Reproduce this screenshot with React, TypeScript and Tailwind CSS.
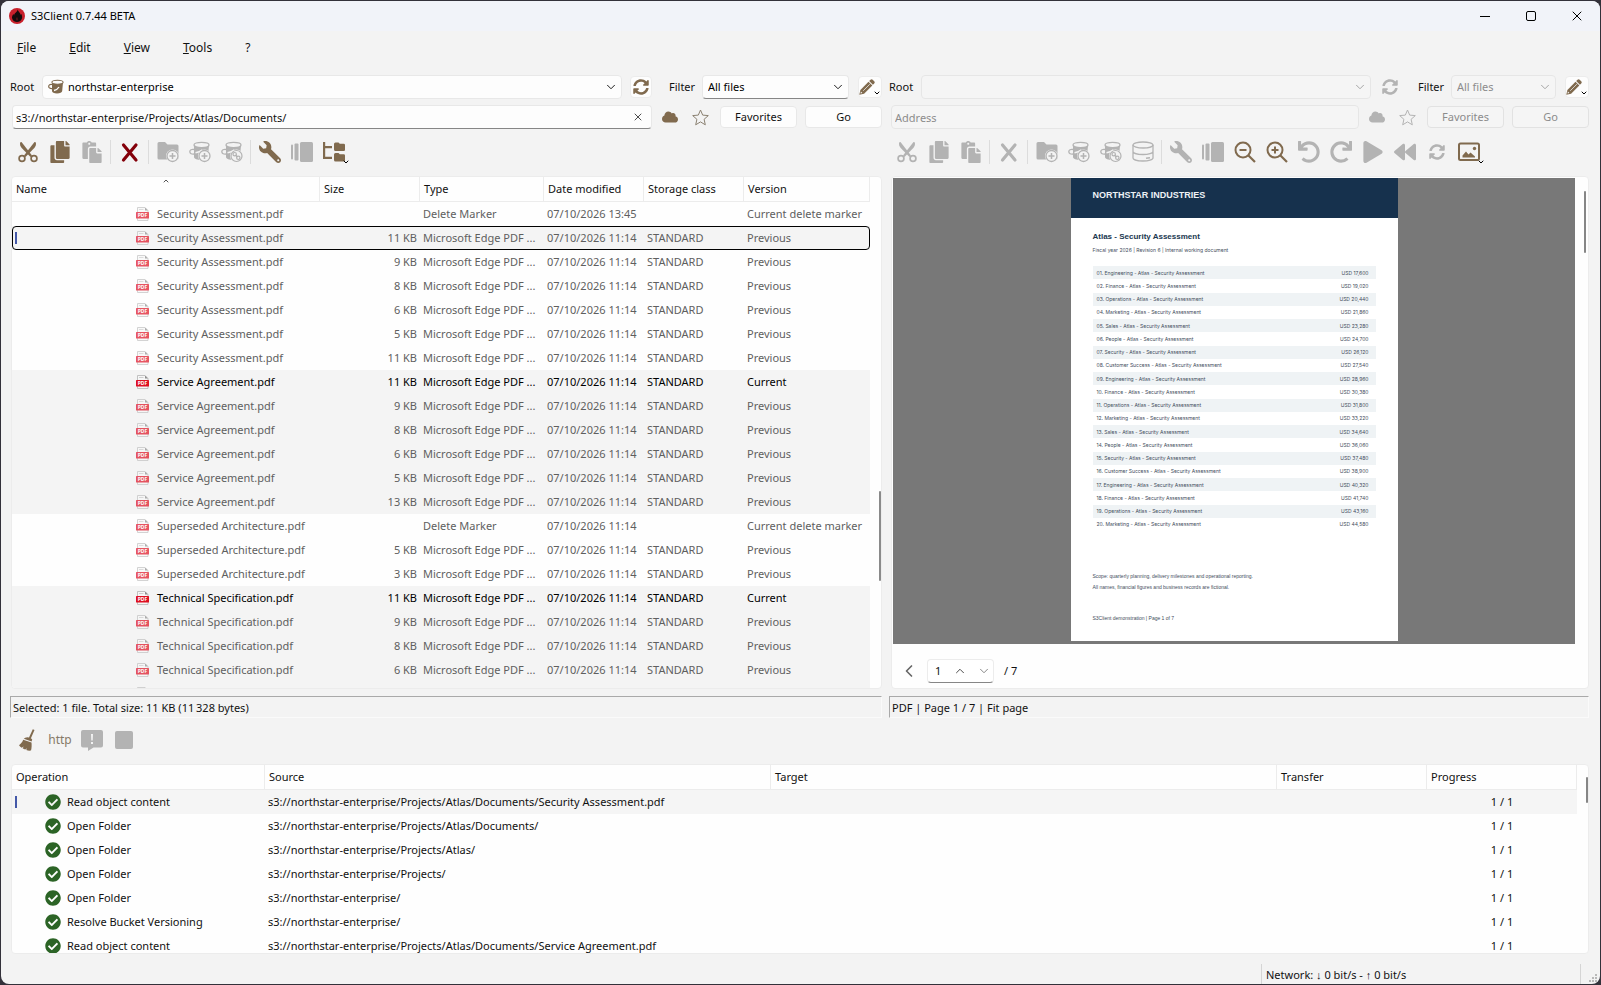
import type { ComponentType, ReactNode } from 'react';
import {
  FaBackward,
  FaCheckCircle,
  FaCloud,
  FaCopy,
  FaPaste,
  FaPlay,
  FaRedo,
  FaSyncAlt,
  FaUndo,
  FaWrench,
} from 'react-icons/fa';
import { ChevronDown, ChevronLeft, ChevronUp, X } from 'lucide-react';

type IconProps = { className?: string };

type FileRow = {
  name: string;
  size: string;
  version: 'Current' | 'Previous' | 'Current delete marker';
  date?: string;
  shaded?: boolean;
  selected?: boolean;
};

const versions = (name: string, sizes: string[], shaded: boolean, current: boolean): FileRow[] =>
  sizes.map((size, i) => ({
    name,
    size,
    shaded,
    version: current && i === 0 ? 'Current' : 'Previous',
  }));

const files: FileRow[] = [
  { name: 'Security Assessment.pdf', size: '', version: 'Current delete marker', date: '07/10/2026 13:45' },
  { name: 'Security Assessment.pdf', size: '11 KB', version: 'Previous', selected: true },
  ...versions('Security Assessment.pdf', ['9 KB', '8 KB', '6 KB', '5 KB', '11 KB'], false, false),
  ...versions('Service Agreement.pdf', ['11 KB', '9 KB', '8 KB', '6 KB', '5 KB', '13 KB'], true, true),
  { name: 'Superseded Architecture.pdf', size: '', version: 'Current delete marker' },
  ...versions('Superseded Architecture.pdf', ['5 KB', '3 KB'], false, false),
  ...versions('Technical Specification.pdf', ['11 KB', '9 KB', '8 KB', '6 KB'], true, true),
];

const operations = [
  { name: 'Read object content', source: 's3://northstar-enterprise/Projects/Atlas/Documents/Security Assessment.pdf' },
  { name: 'Open Folder', source: 's3://northstar-enterprise/Projects/Atlas/Documents/' },
  { name: 'Open Folder', source: 's3://northstar-enterprise/Projects/Atlas/' },
  { name: 'Open Folder', source: 's3://northstar-enterprise/Projects/' },
  { name: 'Open Folder', source: 's3://northstar-enterprise/' },
  { name: 'Resolve Bucket Versioning', source: 's3://northstar-enterprise/' },
  { name: 'Read object content', source: 's3://northstar-enterprise/Projects/Atlas/Documents/Service Agreement.pdf' },
];

const departments = ['Engineering', 'Finance', 'Operations', 'Marketing', 'Sales', 'People', 'Security', 'Customer Success'];

const budget = Array.from({ length: 20 }, (_, i) => ({
  label: `${String(i + 1).padStart(2, '0')}. ${departments[i % 8]} - Atlas - Security Assessment`,
  amount: `USD ${(17600 + i * 1420).toLocaleString('en-US')}`,
}));

/* ---------- icons ---------- */

function LogoIcon() {
  return (
    <svg viewBox="0 0 16 16" className="size-4">
      <circle cx="8" cy="8" r="8" fill="#c8202c" />
      <path d="M8.6 1.5c.4 2 2.600 2.900 3 5.500.3-.5.400-1 .300-1.600 1.200 1.700 1.700 3.800.800 5.700-.8 1.900-2.600 3-4.700 3s-4-1.200-4.700-3c-.7-2 0-3.800 1.200-5.300 0 .7.200 1.200.600 1.600C5.200 4.900 8.700 4 8.600 1.500z" fill="#140b0c" />
      <path d="M8 9c-1 1.200-1.500 2-.9 3.200.3.500 1.500.5 1.800 0C9.500 11.200 8.900 10.200 8 9z" fill="#4a1216" />
    </svg>
  );
}

function CutIcon({ className }: IconProps) {
  return (
    <svg viewBox="0 0 22 22" className={className} fill="none" stroke="currentColor">
      <path d="M3.300 1.200c-.9 2 .2 4.200 1.400 5.700l8.800 9.200 1.500-1.500L4.500 1z" fill="currentColor" stroke="none" />
      <path d="M18.700 1.200c.9 2-.2 4.200-1.400 5.700l-8.800 9.200L7 14.600 17.500 1z" fill="currentColor" stroke="none" />
      <circle cx="5" cy="17.500" r="2.900" strokeWidth="1.700" />
      <circle cx="17" cy="17.500" r="2.900" strokeWidth="1.700" />
    </svg>
  );
}

function CrossIcon({ className }: IconProps) {
  return (
    <svg viewBox="0 0 22 22" className={className} stroke="currentColor" strokeWidth="3.200" strokeLinecap="round">
      <path d="M4.500 4l12.500 15M17 4L4.500 19" />
    </svg>
  );
}

function PlusBadge() {
  return (
    <>
      <circle cx="15.500" cy="15" r="6.500" fill="#f3f3f3" stroke="none" />
      <circle cx="15.500" cy="15" r="5.500" fill="#f3f3f3" stroke="currentColor" strokeWidth="1.300" />
      <path d="M15.500 12v6M12.500 15h6" fill="none" stroke="currentColor" strokeWidth="1.500" />
    </>
  );
}

function NewFolderIcon({ className }: IconProps) {
  return (
    <svg viewBox="0 0 22 22" className={className} fill="currentColor">
      <path d="M2 1h6l2.500 2.500H20a1.500 1.500 0 0 1 1.500 1.500v12A1.500 1.500 0 0 1 20 18.500H2A1.500 1.500 0 0 1 .5 17V2.500A1.500 1.500 0 0 1 2 1z" />
      <PlusBadge />
    </svg>
  );
}

function BucketShape() {
  return (
    <>
      <path d="M5 4.500v11.500c0 2 3.500 3 7.500 3s6-1 6.500-3l1-11.500c-2 1.800-13 1.800-15 0z" fill="currentColor" />
      <ellipse cx="12.500" cy="4" rx="7.500" ry="2.600" fill="#f3f3f3" stroke="currentColor" strokeWidth="1.300" />
      <path d="M5.500 8.500C2.500 7.800.8 9 .8 10.800s2 2.700 4.700 2.200c3-.5 5.500-1.600 7.500-3" fill="none" stroke="currentColor" strokeWidth="1.300" />
      <path d="M6.500 11.800c2.500-.5 5-1.500 7-3" fill="none" stroke="#f3f3f3" strokeWidth="1.600" />
    </>
  );
}

function NewBucketIcon({ className }: IconProps) {
  return (
    <svg viewBox="0 0 22 22" className={className}>
      <BucketShape />
      <PlusBadge />
    </svg>
  );
}

function LinkBucketIcon({ className }: IconProps) {
  return (
    <svg viewBox="0 0 22 22" className={className}>
      <BucketShape />
      <circle cx="15.500" cy="15" r="6.500" fill="#f3f3f3" />
      <circle cx="15.500" cy="15" r="5.500" fill="none" stroke="currentColor" strokeWidth="1.200" />
      <circle cx="13.700" cy="13.200" r="1.700" fill="none" stroke="currentColor" strokeWidth="1.200" />
      <circle cx="17.300" cy="16.800" r="1.700" fill="none" stroke="currentColor" strokeWidth="1.200" />
      <path d="M14.500 14l2 2" stroke="currentColor" strokeWidth="1.200" />
    </svg>
  );
}

function BucketIcon({ className }: IconProps) {
  return (
    <svg viewBox="0 0 16 16" className={className}>
      <path d="M4 3.500v8.500c0 1.600 2 2.500 5 2.500s5-.9 5.200-2.500L15 3.500c-1.500 1.300-9.500 1.300-11 0z" fill="currentColor" />
      <ellipse cx="9.500" cy="3.200" rx="5.600" ry="2" fill="#fdfdfd" stroke="currentColor" strokeWidth="1.100" />
      <path d="M4 5.500C2 5.200.700 6 .7 7.400S2 9.800 4.300 9.500C6 9.200 8.500 8.600 10 8" fill="none" stroke="currentColor" strokeWidth="1.200" />
      <path d="M6 11.500c2.500-.6 4-1.800 5-3.500" fill="none" stroke="#fdfdfd" strokeWidth="1.300" />
    </svg>
  );
}

function StorageIcon({ className }: IconProps) {
  return (
    <svg viewBox="0 0 22 22" className={className} fill="none" stroke="currentColor" strokeWidth="1.300">
      <ellipse cx="11" cy="4" rx="10" ry="3" />
      <path d="M1 4v13c0 1.700 4.500 3 10 3s10-1.300 10-3V4M1 10.500c0 1.700 4.500 3 10 3s10-1.300 10-3" />
      <path d="M14 17.300l4-.6" strokeWidth="1.600" />
    </svg>
  );
}

function WrenchIcon({ className }: IconProps) {
  return <FaWrench className={`${className} -scale-x-100`} />;
}

function ColumnsIcon({ className }: IconProps) {
  return (
    <svg viewBox="0 0 22 22" className={className} fill="currentColor">
      <rect x="0" y="3.500" width="2" height="15" rx="1" />
      <rect x="3.500" y="2.500" width="4" height="17" rx="1" />
      <rect x="9" y="1" width="13" height="20" rx="1.500" />
    </svg>
  );
}

function TreeIcon({ className }: IconProps) {
  return (
    <svg viewBox="0 0 22 22" className={className} fill="currentColor">
      <path d="M0 1h2.200v4H9v2.200H2.200v8.600H9V18H0z" />
      <path d="M12.500 1.500h3l1.300 1.300h3.900A1.300 1.300 0 0 1 22 4.100v4.400A1.300 1.300 0 0 1 20.700 10h-8.200A1.500 1.500 0 0 1 11 8.500V3a1.500 1.500 0 0 1 1.500-1.500z" />
      <path d="M12.500 12h3l1.300 1.300h3.900a1.300 1.300 0 0 1 1.300 1.300V19a1.300 1.300 0 0 1-1.300 1.500h-8.200A1.500 1.500 0 0 1 11 19v-5.500a1.500 1.500 0 0 1 1.500-1.500z" />
    </svg>
  );
}

function ZoomOutIcon({ className }: IconProps) {
  return (
    <svg viewBox="0 0 22 22" className={className} fill="none" stroke="currentColor" strokeWidth="2">
      <circle cx="9" cy="9" r="7.500" />
      <path d="M14.500 14.500L21 21" strokeWidth="2.200" />
      <path d="M5.500 9h7" />
    </svg>
  );
}

function ZoomInIcon({ className }: IconProps) {
  return (
    <svg viewBox="0 0 22 22" className={className} fill="none" stroke="currentColor" strokeWidth="2">
      <circle cx="9" cy="9" r="7.500" />
      <path d="M14.500 14.500L21 21" strokeWidth="2.200" />
      <path d="M5.500 9h7M9 5.500v7" />
    </svg>
  );
}

function ImageIcon({ className }: IconProps) {
  return (
    <svg viewBox="0 0 22 22" className={className} fill="none" stroke="currentColor">
      <rect x="1" y="2.500" width="20" height="16.500" rx="1.500" strokeWidth="2" />
      <path d="M4.500 16.500v-2L8 10.500l2.500 3 2-2 4.500 4v1z" fill="currentColor" stroke="none" />
      <circle cx="16.500" cy="7.500" r="1.700" fill="currentColor" stroke="none" />
    </svg>
  );
}

function StarIcon({ className }: IconProps) {
  return (
    <svg viewBox="0 0 17 17" className={className} fill="none" stroke="currentColor" strokeLinejoin="round">
      <path d="M8.500 1l2.200 5.100 5.600.5-4.200 3.700 1.200 5.500-4.800-2.900-4.800 2.900 1.200-5.500L.7 6.600l5.600-.5z" />
    </svg>
  );
}

function PencilIcon({ className }: IconProps) {
  return (
    <svg viewBox="0 0 16 16" className={className} fill="currentColor">
      <path d="M11.500.8a1.600 1.600 0 0 1 2.200 0l1.500 1.500a1.600 1.600 0 0 1 0 2.200l-1.300 1.300-3.700-3.700z" />
      <path d="M9.500 2.700l3.800 3.800-8.200 8.200-4.800 1.100 1.100-4.800z" />
      <path d="M4.200 11.800l6.600-6.600" stroke="#fdfdfd" strokeWidth=".7" />
      <path d="M1.900 12.600l1.500 1.500-1.900.4z" fill="#fdfdfd" />
    </svg>
  );
}

function BroomIcon({ className }: IconProps) {
  return (
    <svg viewBox="0 0 22 22" className={className} fill="currentColor">
      <path d="M15.800.3l1.700.7-3.700 8.500-1.900-.8z" />
      <path d="M8.200 8.800c2-1.200 5.300-.6 7 1.800l-.6 1.800-7.800-2.600z" />
      <path d="M6.200 10.700l8.300 2.800c.3 2.800.2 5.500-.5 8.100-2 .2-3.300 0-4.700-.5l.6-1.900-1.600 1.400c-1-.3-1.900-.8-2.700-1.300l1.200-1.800-2.200 1.200c-1.200-.8-2-1.600-2.600-2.500 2-1.400 3.300-3.200 4.200-5.500z" />
    </svg>
  );
}

function MessageIcon({ className }: IconProps) {
  return (
    <svg viewBox="0 0 22 22" className={className} fill="currentColor">
      <path d="M2 1h18a2 2 0 0 1 2 2v13.500a2 2 0 0 1-2 2h-7.500L7 22v-3.500H2a2 2 0 0 1-2-2V3a2 2 0 0 1 2-2z" />
      <path d="M10 5h2l-.3 6.500h-1.400zM10 13h2v2h-2z" fill="#f3f3f3" />
    </svg>
  );
}

function StopIcon({ className }: IconProps) {
  return (
    <svg viewBox="0 0 22 22" className={className} fill="currentColor">
      <rect x="2" y="2" width="18" height="18" rx="2" />
    </svg>
  );
}

function PdfIcon({ className }: IconProps) {
  return (
    <svg viewBox="0 0 13 14" className={className}>
      <path d="M1.500.5h7.500l3 3V13.500h-10.500z" fill="#f7f7f7" stroke="#b4b4b4" strokeWidth=".8" />
      <path d="M9 .5v3h3z" fill="#8d8d8d" />
      <path d="M3 2.500h4.500" stroke="#c4c4c4" strokeWidth=".8" />
      <rect x="0" y="5" width="13" height="6.500" rx=".6" fill="#de1022" />
      <text x="6.500" y="10" textAnchor="middle" fontSize="5" fontWeight="700" fill="#fff">PDF</text>
    </svg>
  );
}

/* ---------- controls ---------- */

type Tool = { label: string; icon: ComponentType<IconProps>; on?: boolean; color?: string; menu?: boolean; small?: boolean };

function ToolButton({ tool }: { tool: Tool }) {
  const Icon = tool.icon;
  return (
    <button
      aria-label={tool.label}
      disabled={!tool.on}
      className={`relative flex h-8 w-8 items-center justify-center ${tool.color ?? (tool.on ? 'text-[#806a4e]' : 'text-[#b3b3b3]')}`}
    >
      <Icon className={tool.small ? 'size-4' : 'size-[22px]'} />
      {tool.menu && <ChevronDown className="absolute right-0 bottom-0.5 size-2 text-black" strokeWidth={3} />}
    </button>
  );
}

function Toolbar({ groups }: { groups: Tool[][] }) {
  return (
    <div className="flex h-[47px] items-center pb-px pl-0.5">
      {groups.map((group, i) => (
        <div key={i} className="flex items-center">
          {i > 0 && <span className="mr-[3px] ml-0.5 h-6 w-px bg-[#dcdcdc]" />}
          {group.map((tool) => (
            <ToolButton key={tool.label} tool={tool} />
          ))}
        </div>
      ))}
    </div>
  );
}

function Select({ id, value, disabled, icon, className }: { id: string; value: string; disabled?: boolean; icon?: ReactNode; className: string }) {
  return (
    <div className={`relative ${className}`}>
      {icon}
      <select
        id={id}
        disabled={disabled}
        className={`h-6 w-full appearance-none rounded border pr-6 outline-none ${icon ? 'pl-[25px]' : 'pl-[5px]'} ${
          disabled ? 'border-[#e6e6e6] bg-[#f5f5f5] text-[#8c8c8c]' : 'border-[#e8e8e8] bg-[#fdfdfd] text-black'
        } ${id === 'filter-left' ? 'border-b-[#868686]' : ''}`}
      >
        <option>{value}</option>
      </select>
      <ChevronDown
        className={`pointer-events-none absolute top-[5px] right-1 size-3.5 ${disabled ? 'text-[#9a9a9a]' : 'text-black'}`}
        strokeWidth={1.500}
      />
    </div>
  );
}

function PaneHeader({ side, root, address }: { side: 'left' | 'right'; root: string; address: string }) {
  const off = side === 'right';
  return (
    <>
      <div className="flex h-6 items-center">
        <label htmlFor={`root-${side}`} className="w-8">Root</label>
        <Select
          id={`root-${side}`}
          value={root}
          disabled={off}
          className="min-w-0 flex-1"
          icon={off ? undefined : <BucketIcon className="pointer-events-none absolute top-1 left-1.5 size-4 text-[#806a4e]" />}
        />
        <button
          aria-label="Refresh"
          disabled={off}
          className={`mr-[17px] ml-2 flex size-[22px] items-center justify-center rounded ${
            off ? 'text-[#b3b3b3]' : 'border border-[#ececec] bg-[#fdfdfd] text-[#806a4e]'
          }`}
        >
          <FaSyncAlt className="size-4" />
        </button>
        <label htmlFor={`filter-${side}`} className="w-[33px]">Filter</label>
        <Select id={`filter-${side}`} value="All files" disabled={off} className={off ? 'w-[105px]' : 'w-[147px]'} />
        <button
          aria-label="Edit filter"
          className="relative ml-[9px] flex h-[22px] w-6 items-center justify-center rounded border border-[#ececec] bg-[#fdfdfd] text-[#806a4e]"
        >
          <PencilIcon className="mr-1.5 size-4" />
          <ChevronDown className="absolute right-0 bottom-0 size-2 text-black" strokeWidth={3} />
        </button>
      </div>
      <div className="mt-1.5 flex h-6 items-center">
        <div className="relative ml-0.5 min-w-0 flex-1">
          <input
            aria-label="Address"
            placeholder="Address"
            defaultValue={address}
            disabled={off}
            className={`block h-6 w-full rounded border pr-6 pl-[3px] outline-none placeholder:text-[#8c8c8c] ${
              off ? 'border-[#e6e6e6] bg-[#f5f5f5]' : 'border-[#e8e8e8] border-b-[#868686] bg-[#fdfdfd]'
            }`}
          />
          {!off && (
            <button aria-label="Clear address" className="absolute top-1.5 right-2">
              <X className="size-3" strokeWidth={1.500} />
            </button>
          )}
        </div>
        <button aria-label="Cloud" disabled={off} className={`ml-2.5 flex w-4 justify-center ${off ? 'text-[#b3b3b3]' : 'text-[#806a4e]'}`}>
          <FaCloud className="size-4" />
        </button>
        <button aria-label="Add to favorites" disabled={off} className={`mr-[11px] ml-3.5 flex w-[17px] justify-center ${off ? 'text-[#b3b3b3]' : 'text-[#8a8071]'}`}>
          <StarIcon className="size-[17px]" />
        </button>
        {['Favorites', 'Go'].map((text) => (
          <button
            key={text}
            disabled={off}
            className={`mr-2 h-[22px] w-[77px] rounded border last:mr-0 ${
              off ? 'border-[#e2e2e2] bg-[#f5f5f5] text-[#8c8c8c]' : 'border-[#e8e8e8] bg-[#fdfdfd]'
            }`}
          >
            {text}
          </button>
        ))}
      </div>
    </>
  );
}

function StatusLabel({ children }: { children: ReactNode }) {
  return (
    <div className="mt-[7px] h-[22px] border border-t-[#a9a9a9] border-r-[#fafafa] border-b-[#fafafa] border-l-[#a9a9a9] pl-0.5 leading-[22px]">
      {children}
    </div>
  );
}

function SelectionMark() {
  return <span className="absolute top-1.5 left-[3px] h-3 w-0.5 bg-[#4458a8]" />;
}

/* ---------- panes ---------- */

const fileTools: Tool[][] = [
  [
    { label: 'Cut', icon: CutIcon, on: true },
    { label: 'Copy', icon: FaCopy, on: true },
    { label: 'Paste', icon: FaPaste },
  ],
  [{ label: 'Delete', icon: CrossIcon, on: true, color: 'text-[#84000a]' }],
  [
    { label: 'New folder', icon: NewFolderIcon },
    { label: 'New bucket', icon: NewBucketIcon },
    { label: 'Link bucket', icon: LinkBucketIcon },
  ],
  [
    { label: 'Properties', icon: WrenchIcon, on: true },
    { label: 'Columns', icon: ColumnsIcon },
    { label: 'Tree view', icon: TreeIcon, on: true, menu: true },
  ],
];

const previewTools: Tool[][] = [
  [
    { label: 'Cut', icon: CutIcon },
    { label: 'Copy', icon: FaCopy },
    { label: 'Paste', icon: FaPaste },
  ],
  [{ label: 'Delete', icon: CrossIcon }],
  [
    { label: 'New folder', icon: NewFolderIcon },
    { label: 'New bucket', icon: NewBucketIcon },
    { label: 'Link bucket', icon: LinkBucketIcon },
    { label: 'Storage class', icon: StorageIcon },
  ],
  [
    { label: 'Properties', icon: WrenchIcon },
    { label: 'Columns', icon: ColumnsIcon },
    { label: 'Zoom out', icon: ZoomOutIcon, on: true },
    { label: 'Zoom in', icon: ZoomInIcon, on: true },
    { label: 'Rotate left', icon: FaUndo },
    { label: 'Rotate right', icon: FaRedo },
    { label: 'Play', icon: FaPlay },
    { label: 'Rewind', icon: FaBackward },
    { label: 'Reload', icon: FaSyncAlt, small: true },
    { label: 'Image options', icon: ImageIcon, on: true, menu: true },
  ],
];

const th = 'h-[25px] border-r border-b border-[#ececec] px-1 text-left font-normal whitespace-nowrap';

function FileTable() {
  return (
    <div className="relative ml-px min-h-0 flex-1 overflow-hidden rounded border border-[#ececec] bg-[#fefefe] pr-[11px]">
      <table className="w-full table-fixed border-separate border-spacing-0">
        <colgroup>
          <col />
          <col className="w-[100px]" />
          <col className="w-[124px]" />
          <col className="w-[100px]" />
          <col className="w-[100px]" />
          <col className="w-[126px]" />
        </colgroup>
        <thead>
          <tr>
            <th className={`relative ${th}`}>
              Name
              <ChevronUp className="absolute top-0 left-1/2 size-2 -translate-x-1/2 text-[#555]" strokeWidth={3} />
            </th>
            {['Size', 'Type', 'Date modified', 'Storage class', 'Version'].map((title) => (
              <th key={title} className={th}>{title}</th>
            ))}
          </tr>
        </thead>
        <tbody>
          {files.map((file, i) => {
            const marker = file.version === 'Current delete marker';
            const current = file.version === 'Current';
            return (
              <tr
                key={i}
                className={`h-6 whitespace-nowrap ${current ? 'text-black' : 'text-[#5f5f5f]'} ${file.shaded ? 'bg-[#f4f4f4]' : ''} ${
                  file.selected ? 'rounded bg-[#f4f4f4] outline-1 -outline-offset-1 outline-black' : ''
                }`}
              >
                <td className="relative p-0 pl-[124px]">
                  {file.selected && <SelectionMark />}
                  <span className="flex items-center gap-2">
                    <PdfIcon className={`h-3.5 w-[13px] ${current ? '' : 'opacity-70'}`} />
                    {file.name}
                  </span>
                </td>
                <td className="p-0 pr-[3px] text-right">{file.size}</td>
                <td className="p-0 pl-[3px]">{marker ? 'Delete Marker' : 'Microsoft Edge PDF ...'}</td>
                <td className="p-0 pl-[3px]">{file.date ?? '07/10/2026 11:14'}</td>
                <td className="p-0 pl-[3px]">{marker ? '' : 'STANDARD'}</td>
                <td className="p-0 pl-[3px]">{file.version}</td>
              </tr>
            );
          })}
          {/* top edge of the next row, cut by the viewport */}
          <tr className="h-6 bg-[#f4f4f4]">
            <td colSpan={6} className="p-0 pl-[124px]">
              <PdfIcon className="h-3.5 w-[13px] opacity-70" />
            </td>
          </tr>
        </tbody>
      </table>
      <span className="absolute top-[314px] right-0 h-[90px] w-0.5 rounded bg-[#8a8a8a]" />
    </div>
  );
}

function PdfPage() {
  return (
    <div className="flex h-[463px] w-[327px] flex-col bg-white font-['Liberation_Sans',Arial,sans-serif] text-[5px] leading-[11px] text-[#3f4d5c]">
      <div className="h-10 bg-[#16314d] px-[22px] pt-3 text-[9px] font-bold text-[#eef2f6]">NORTHSTAR INDUSTRIES</div>
      <div className="px-[22px] pt-[13px]">
        <h1 className="text-[8px] font-bold text-[#20374f]">Atlas - Security Assessment</h1>
        <p className="mt-[3px] font-['Inter',sans-serif]">Fiscal year 2026 | Revision 6 | Internal working document</p>
        <table className="mt-2.5 h-[265px] w-full border-collapse font-['Inter',sans-serif] leading-[12px]">
          <tbody>
            {budget.map((line) => (
              <tr key={line.label} className="odd:bg-[#eff3f5]">
                <td className="py-0 pl-1">{line.label}</td>
                <td className="py-0 pr-[7px] text-right">{line.amount}</td>
              </tr>
            ))}
          </tbody>
        </table>
        <p className="mt-10">Scope: quarterly planning, delivery milestones and operational reporting.</p>
        <p>All names, financial figures and business records are fictional.</p>
        <p className="mt-5">S3Client demonstration | Page 1 of 7</p>
      </div>
    </div>
  );
}

function Preview() {
  return (
    <div className="ml-0.5 flex min-h-0 flex-1 flex-col rounded border border-[#ececec] bg-[#fefefe] pt-px pl-px">
      <div className="relative flex h-[466px] pr-[13px]">
        <div className="flex flex-1 justify-center bg-[#787878]">
          <PdfPage />
        </div>
        <span className="absolute top-[13px] right-0.5 h-[62px] w-0.5 rounded bg-[#868686]" />
      </div>
      <div className="flex flex-1 items-center pt-2.5 pl-1.5">
        <button aria-label="Previous page" className="text-[#666]">
          <ChevronLeft className="size-5" strokeWidth={2} />
        </button>
        <div className="mr-2.5 ml-2 flex h-6 w-[67px] items-center rounded border border-[#ececec] border-b-[#868686] bg-white">
          <input aria-label="Page" defaultValue="1" className="w-6 min-w-0 pl-[7px] outline-none" />
          <button aria-label="Next page" className="flex w-4 justify-center text-[#333]">
            <ChevronUp className="size-3.5" strokeWidth={1.500} />
          </button>
          <button aria-label="Last page" className="ml-2 flex w-4 justify-center text-[#777]">
            <ChevronDown className="size-3.5" strokeWidth={1.500} />
          </button>
        </div>
        <span>/ 7</span>
      </div>
    </div>
  );
}

function OperationLog() {
  return (
    <div className="relative mr-0.5 ml-px h-[190px] overflow-hidden rounded border border-[#ececec] bg-[#fefefe] pr-[11px]">
      <table className="w-full table-fixed border-separate border-spacing-0">
        <colgroup>
          <col className="w-[253px]" />
          <col />
          <col />
          <col className="w-[150px]" />
          <col className="w-[150px]" />
        </colgroup>
        <thead>
          <tr>
            {['Operation', 'Source', 'Target', 'Transfer', 'Progress'].map((title) => (
              <th key={title} className={th}>{title}</th>
            ))}
          </tr>
        </thead>
        <tbody>
          {operations.map((op, i) => (
            <tr key={i} className={`h-6 whitespace-nowrap ${i === 0 ? 'bg-[#f5f5f5]' : ''}`}>
              <td className="relative p-0 pl-[33px]">
                {i === 0 && <SelectionMark />}
                <span className="flex items-center gap-1.5">
                  <FaCheckCircle className="size-4 text-[#2c6426]" />
                  {op.name}
                </span>
              </td>
              <td className="p-0 pl-[3px]">{op.source}</td>
              <td />
              <td />
              <td className="p-0 text-center">1 / 1</td>
            </tr>
          ))}
        </tbody>
      </table>
      <span className="absolute top-3 right-0 h-[26px] w-0.5 rounded bg-[#868686]" />
    </div>
  );
}

function TitleBar() {
  return (
    <header className="flex h-[30px] items-center bg-[#f1f3f9] pl-2 text-black">
      <LogoIcon />
      <span className="ml-1.5">S3Client 0.7.44 BETA</span>
      <div className="ml-auto flex">
        <button aria-label="Minimize" className="flex h-7 w-[46px] items-center justify-center">
          <span className="h-px w-2.5 bg-black" />
        </button>
        <button aria-label="Maximize" className="flex h-7 w-[46px] items-center justify-center">
          <span className="size-2.5 rounded-[2px] border border-black" />
        </button>
        <button aria-label="Close" className="flex h-7 w-[46px] items-center justify-center">
          <X className="size-4" strokeWidth={1.500} />
        </button>
      </div>
    </header>
  );
}

const menu = ['File', 'Edit', 'View', 'Tools', '?'];

export default function App() {
  return (
    <div className="h-screen bg-[#33313a] p-px text-[11px] text-[#111] font-['Noto_Sans','Open_Sans',sans-serif]">
      <div className="flex h-full flex-col overflow-hidden rounded-lg bg-[#f3f3f3]">
        <TitleBar />
        <nav className="flex h-8 items-center gap-[33px] pt-0.5 pl-4 text-xs">
          {menu.map((item) => (
            <button key={item}>
              {item === '?' ? item : <><u>{item[0]}</u>{item.slice(1)}</>}
            </button>
          ))}
        </nav>

        <main className="flex min-h-0 flex-1 gap-[7px] pt-3 pr-[11px] pl-[9px]">
          <section className="flex min-w-0 flex-[872] flex-col">
            <PaneHeader side="left" root="northstar-enterprise" address="s3://northstar-enterprise/Projects/Atlas/Documents/" />
            <Toolbar groups={fileTools} />
            <FileTable />
            <StatusLabel>Selected: 1 file. Total size: 11 KB (11{'\u202f'}328 bytes)</StatusLabel>
          </section>
          <section className="flex min-w-0 flex-[700] flex-col">
            <PaneHeader side="right" root="" address="" />
            <Toolbar groups={previewTools} />
            <Preview />
            <StatusLabel>PDF | Page 1 / 7 | Fit page</StatusLabel>
          </section>
        </main>

        <section className="px-[9px]">
          <div className="flex h-[46px] items-center pb-0.5 pl-0.5">
            <ToolButton tool={{ label: 'Clear log', icon: BroomIcon, on: true }} />
            <button className="h-8 w-8 text-xs text-[#857a68]">http</button>
            <ToolButton tool={{ label: 'Messages', icon: MessageIcon }} />
            <ToolButton tool={{ label: 'Stop', icon: StopIcon }} />
          </div>
          <OperationLog />
        </section>

        <footer className="mt-2.5 flex h-5 items-stretch pr-0.5 leading-[22px]">
          <div className="ml-auto w-[320px] border-x border-[#d5d5d5] pl-1">Network: ↓ 0 bit/s - ↑ 0 bit/s</div>
          <svg viewBox="0 0 16 20" className="ml-px h-5 w-4" fill="#b9b9b9">
            <path d="M13 10h2v2h-2zM10 13h2v2h-2zM13 13h2v2h-2zM7 16h2v2H7zM10 16h2v2h-2zM13 16h2v2h-2z" />
          </svg>
        </footer>
      </div>
    </div>
  );
}
